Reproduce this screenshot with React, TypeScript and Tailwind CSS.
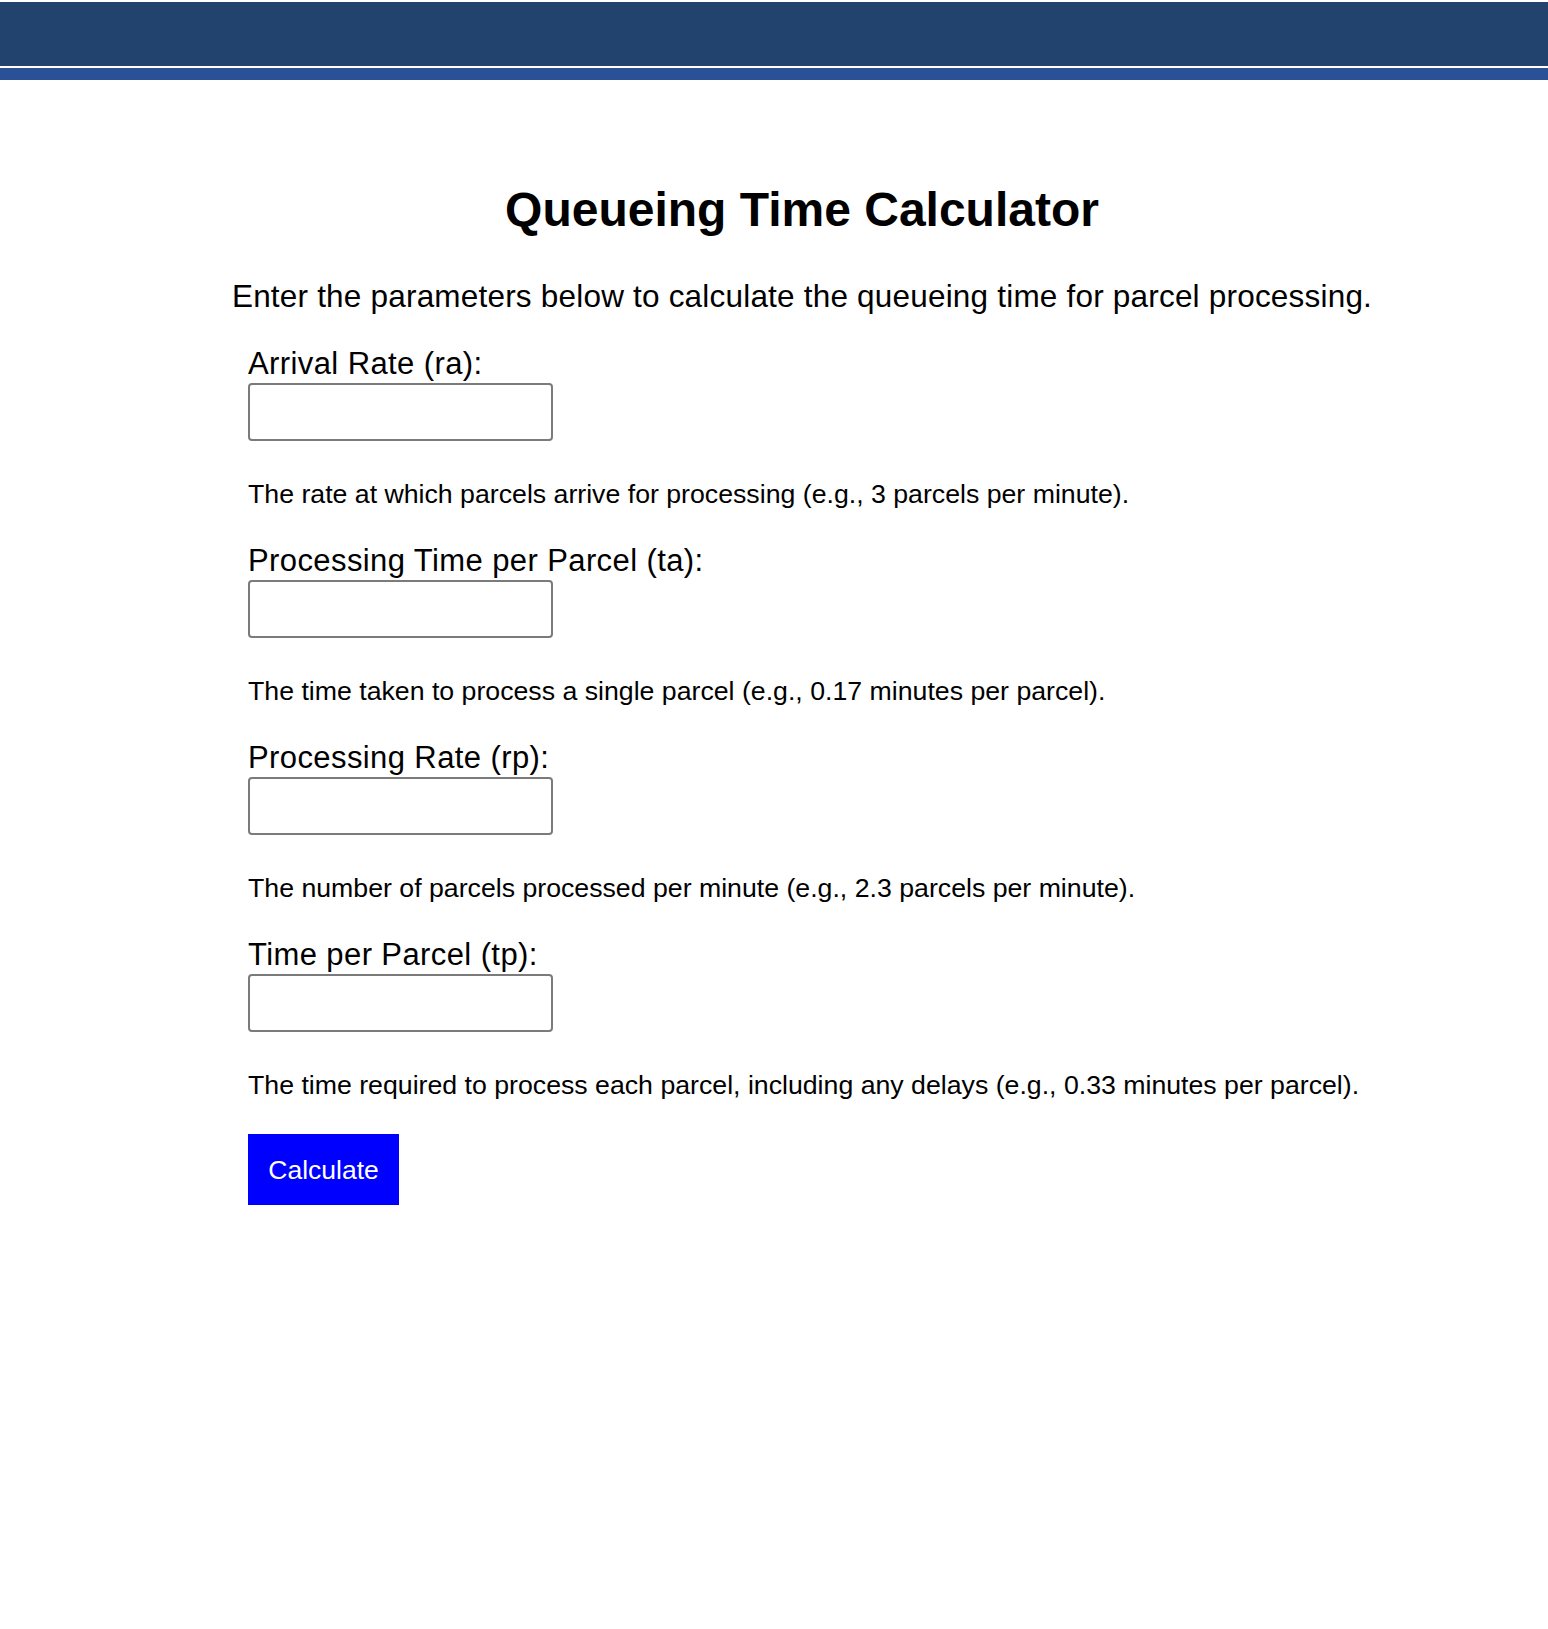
import { useState } from "react"

interface Field {
  id: string
  label: string
  hint: string
}

const fields: Field[] = [
  {
    id: "ra",
    label: "Arrival Rate (ra):",
    hint: "The rate at which parcels arrive for processing (e.g., 3 parcels per minute).",
  },
  {
    id: "ta",
    label: "Processing Time per Parcel (ta):",
    hint: "The time taken to process a single parcel (e.g., 0.17 minutes per parcel).",
  },
  {
    id: "rp",
    label: "Processing Rate (rp):",
    hint: "The number of parcels processed per minute (e.g., 2.3 parcels per minute).",
  },
  {
    id: "tp",
    label: "Time per Parcel (tp):",
    hint: "The time required to process each parcel, including any delays (e.g., 0.33 minutes per parcel).",
  },
]

export default function App() {
  const [values, setValues] = useState<Record<string, string>>({})

  return (
    <div className="min-h-screen bg-white pt-[2px] text-black font-['Liberation_Sans',Arial,sans-serif]">
      {/* Header bars */}
      <div className="h-[64px] bg-[#23436f]"></div>
      <div className="h-[2px] bg-white"></div>
      <div className="h-[12px] bg-[#2a5195]"></div>

      <div className="pl-[56px]">
        <h1 className="mt-[102px] text-center text-[48px] leading-[56px] font-bold">
          Queueing Time Calculator
        </h1>
        <p className="mt-[40px] text-center text-[31.5px] leading-[36px] tracking-[0.2px]">
          Enter the parameters below to calculate the queueing time for parcel processing.
        </p>

        <form
          className="mt-[32px] pl-[192px] flex flex-col"
          onSubmit={(e) => e.preventDefault()}
        >
          {fields.map((f) => (
            <div key={f.id} className="flex flex-col items-start mb-[34px]">
              <label htmlFor={f.id} className="text-[31px] leading-[36px] tracking-[0.4px]">
                {f.label}
              </label>
              <input
                id={f.id}
                type="number"
                value={values[f.id] || ""}
                onChange={(e) => setValues({ ...values, [f.id]: e.target.value })}
                className="mt-[1px] w-[305px] h-[58px] border-2 border-[#7b7b7b] rounded-[4px] bg-white px-2 text-[26px]"
              />
              <p className="mt-[38px] text-[26.7px] leading-[30px]">{f.hint}</p>
            </div>
          ))}

          <div>
            <button
              type="submit"
              className="h-[71px] w-[151px] bg-[#0000ff] text-white text-[26.5px] leading-[30px]"
            >
              Calculate
            </button>
          </div>
        </form>
      </div>
    </div>
  )
}
